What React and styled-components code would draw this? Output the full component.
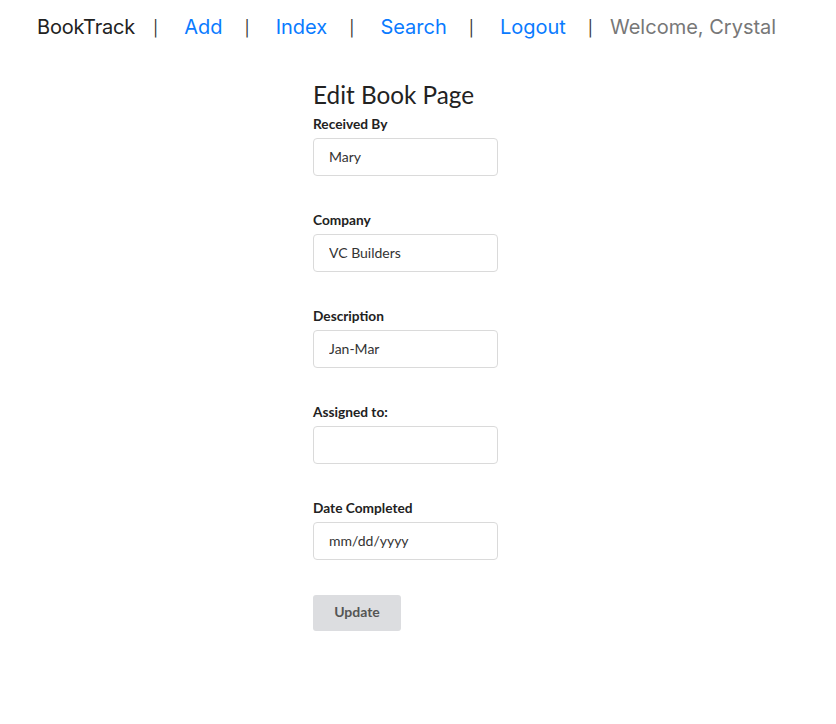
import React from 'react';
import styled, { createGlobalStyle } from 'styled-components';

const GlobalStyle = createGlobalStyle`
  body {
    margin: 8px;
    background: #fff;
    font-family: Lato, "Noto Sans", sans-serif;
  }
`;

const NavBar = styled.nav`
  display: flex;
  align-items: baseline;
  padding: 7px 0 0 29px;
  font-family: Inter, "Liberation Sans", sans-serif;
  font-size: 20px;
  line-height: 24px;
`;

const Brand = styled.span`
  color: #222;
  letter-spacing: -0.2px;
`;

const Sep = styled.span`
  color: #333;
  font-size: 15.5px;
  margin: 0 17px 0 18px;
`;

const NavLink = styled.a`
  color: #0a7bff;
  text-decoration: none;
  padding: 0 4px 0 9px;
  cursor: pointer;
`;

const Welcome = styled.span`
  color: #777;
`;

const Main = styled.main`
  display: flex;
  justify-content: center;
  padding-top: 39px;
`;

const Form = styled.form`
  width: 210px;
  display: flex;
  flex-direction: column;
  align-items: flex-start;
`;

const Title = styled.h1`
  margin: 0 0 7px;
  font-size: 24.3px;
  line-height: 29px;
  font-weight: 400;
  color: #222;
`;

const Label = styled.label`
  font-size: 13.7px;
  line-height: 16px;
  font-weight: 700;
  color: #222;
  margin-bottom: 6px;
`;

const Input = styled.input`
  box-sizing: border-box;
  width: 185px;
  height: 38px;
  margin: 0 0 36px;
  padding: 0 15px 1px;
  border: 1px solid #dadada;
  border-radius: 4px;
  font-family: Lato, "Noto Sans", sans-serif;
  font-size: 14px;
  color: #333;
  outline: none;
`;

const Button = styled.button`
  width: 88px;
  height: 36px;
  margin-top: -1px;
  padding: 0 0 3px;
  border: none;
  border-radius: 3px;
  background: #dcdde0;
  color: #555;
  font-family: Lato, "Noto Sans", sans-serif;
  font-size: 14px;
  font-weight: 700;
  cursor: pointer;
`;

const fields = [
  { label: 'Received By', value: 'Mary' },
  { label: 'Company', value: 'VC Builders' },
  { label: 'Description', value: 'Jan-Mar' },
  { label: 'Assigned to:', value: '' },
  { label: 'Date Completed', value: 'mm/dd/yyyy' },
];

const App = () => (
  <>
    <GlobalStyle />
    <NavBar>
      <Brand>BookTrack</Brand>
      <Sep>|</Sep>
      <NavLink>Add</NavLink>
      <Sep>|</Sep>
      <NavLink>Index</NavLink>
      <Sep>|</Sep>
      <NavLink>Search</NavLink>
      <Sep>|</Sep>
      <NavLink>Logout</NavLink>
      <Sep>|</Sep>
      <Welcome>Welcome, Crystal</Welcome>
    </NavBar>
    <Main>
      <Form onSubmit={(e) => e.preventDefault()}>
        <Title>Edit Book Page</Title>
        {fields.map(({ label, value }) => (
          <React.Fragment key={label}>
            <Label>{label}</Label>
            <Input type="text" defaultValue={value} />
          </React.Fragment>
        ))}
        <Button type="submit">Update</Button>
      </Form>
    </Main>
  </>
);

export default App;
